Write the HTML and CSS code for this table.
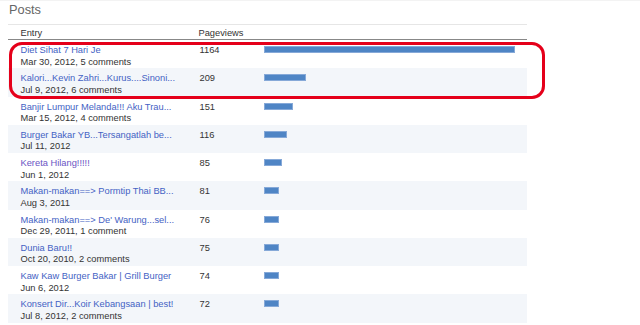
FILE: index.html
```html
<!DOCTYPE html>
<html>
<head>
<meta charset="utf-8">
<link rel="stylesheet" href="styles.css">
</head>
<body>
<div class="page">
  <h2 class="title">Posts</h2>
  <div class="stats">
    <div class="head">
      <div class="c-entry">Entry</div>
      <div class="c-views">Pageviews</div>
      <div class="c-bar"></div>
    </div>
    <div class="row">
      <div class="c-entry"><a class="link">Diet Sihat 7 Hari Je</a><span class="date">Mar 30, 2012, 5 comments</span></div>
      <div class="c-views">1164</div>
      <div class="c-bar"><span class="bar" style="width:251px"></span></div>
    </div>
    <div class="row alt">
      <div class="c-entry"><a class="link">Kalori...Kevin Zahri...Kurus....Sinoni...</a><span class="date">Jul 9, 2012, 6 comments</span></div>
      <div class="c-views">209</div>
      <div class="c-bar"><span class="bar" style="width:42px"></span></div>
    </div>
    <div class="row">
      <div class="c-entry"><a class="link">Banjir Lumpur Melanda!!! Aku Trau...</a><span class="date">Mar 15, 2012, 4 comments</span></div>
      <div class="c-views">151</div>
      <div class="c-bar"><span class="bar" style="width:29px"></span></div>
    </div>
    <div class="row alt">
      <div class="c-entry"><a class="link">Burger Bakar YB...Tersangatlah be...</a><span class="date">Jul 11, 2012</span></div>
      <div class="c-views">116</div>
      <div class="c-bar"><span class="bar" style="width:23px"></span></div>
    </div>
    <div class="row">
      <div class="c-entry"><a class="link visited">Kereta Hilang!!!!!</a><span class="date">Jun 1, 2012</span></div>
      <div class="c-views">85</div>
      <div class="c-bar"><span class="bar" style="width:18px"></span></div>
    </div>
    <div class="row alt">
      <div class="c-entry"><a class="link">Makan-makan==&gt; Pormtip Thai BB...</a><span class="date">Aug 3, 2011</span></div>
      <div class="c-views">81</div>
      <div class="c-bar"><span class="bar" style="width:15px"></span></div>
    </div>
    <div class="row">
      <div class="c-entry"><a class="link">Makan-makan==&gt; De' Warung...sel...</a><span class="date">Dec 29, 2011, 1 comment</span></div>
      <div class="c-views">76</div>
      <div class="c-bar"><span class="bar" style="width:15px"></span></div>
    </div>
    <div class="row alt">
      <div class="c-entry"><a class="link">Dunia Baru!!</a><span class="date">Oct 20, 2010, 2 comments</span></div>
      <div class="c-views">75</div>
      <div class="c-bar"><span class="bar" style="width:15px"></span></div>
    </div>
    <div class="row">
      <div class="c-entry"><a class="link">Kaw Kaw Burger Bakar | Grill Burger</a><span class="date">Jun 6, 2012</span></div>
      <div class="c-views">74</div>
      <div class="c-bar"><span class="bar" style="width:15px"></span></div>
    </div>
    <div class="row alt">
      <div class="c-entry"><a class="link">Konsert Dir...Koir Kebangsaan | best!</a><span class="date">Jul 8, 2012, 2 comments</span></div>
      <div class="c-views">72</div>
      <div class="c-bar"><span class="bar" style="width:15px"></span></div>
    </div>
  </div>
  <div class="highlight"></div>
</div>
</body>
</html>
```

FILE: styles.css
```css
html, body {
  margin: 0;
  padding: 0;
  background: #fff;
}
body {
  font-family: "Liberation Sans", Arial, sans-serif;
  color: #333;
  border-top: 1px solid #f3f3f3;
}
.page {
  position: relative;
  padding-left: 8px;
  width: 519px;
}
.title {
  margin: 0;
  padding: 1px 0 0 1px;
  height: 22px;
  font-size: 12.8px;
  line-height: 15px;
  font-weight: normal;
  color: #666;
}
.stats {
  border-top: 1px solid #e6e6e6;
  font-size: 9.3px;
  line-height: 11.5px;
}
.head {
  display: flex;
  height: 15px;
  padding-top: 2.8px;
  box-sizing: border-box;
  border-bottom: 1px solid #888;
  color: #333;
}
.row {
  display: flex;
  height: 28.25px;
  padding-top: 5px;
  box-sizing: border-box;
}
.row.alt {
  background: #f3f6fa;
}
.c-entry {
  width: 190px;
  padding-left: 12.5px;
  box-sizing: border-box;
  display: flex;
  flex-direction: column;
}
.c-views {
  width: 66px;
  padding-left: 0.5px;
  box-sizing: border-box;
}
.row .c-views {
  padding-left: 1.5px;
}
.c-bar {
  flex: 1;
  padding-top: 1.2px;
}
.link {
  color: #4462c4;
  text-decoration: none;
  white-space: nowrap;
}
.link.visited {
  color: #6a55c4;
}
.date {
  color: #333;
  white-space: nowrap;
}
.bar {
  display: block;
  height: 7px;
  box-sizing: border-box;
  background: #4f85c5;
  border: 1px solid #86a9d8;
}
.highlight {
  position: absolute;
  left: 9px;
  top: 41px;
  width: 536px;
  height: 57px;
  box-sizing: border-box;
  border: 3px solid #e5001a;
  border-radius: 13px;
}
```
